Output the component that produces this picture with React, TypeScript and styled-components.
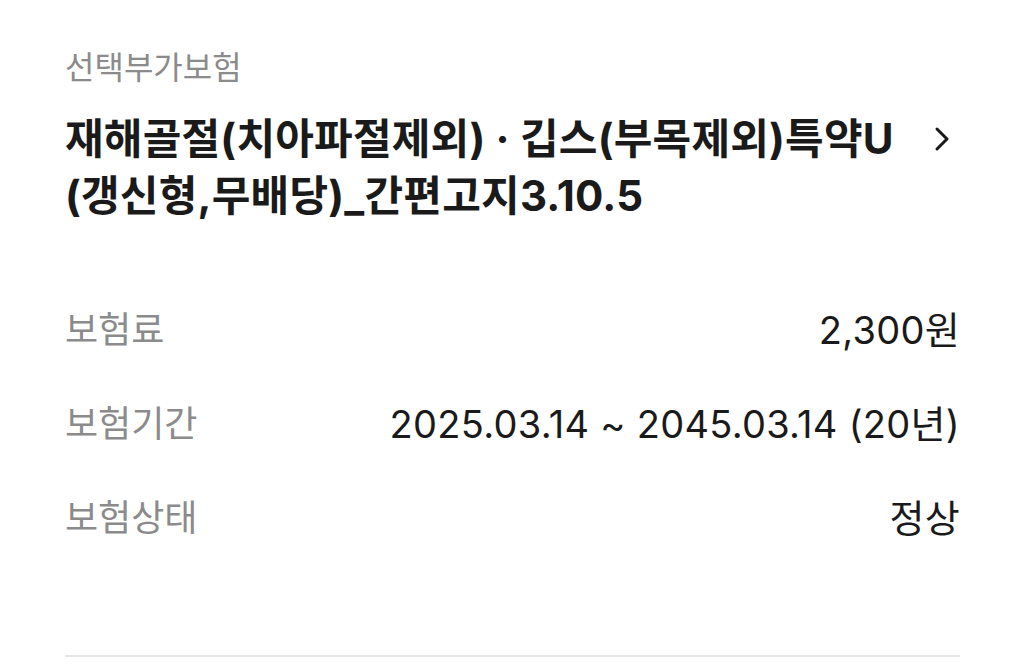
import { FC } from 'react'
import styled, { createGlobalStyle } from 'styled-components'

const GlobalStyle = createGlobalStyle`
    html, body {
        margin: 0;
        padding: 0;
        background: #ffffff;
    }
    body {
        font-family: "Noto Sans CJK KR", "Noto Sans", sans-serif;
        -webkit-font-smoothing: antialiased;
    }
`;

const Wrapper = styled.section`
    display: flex;
    flex-direction: column;
    width: 1025px;
    height: 665px;
    box-sizing: border-box;
    padding: 40px 65px 0;
    overflow: hidden;
`;

const Category = styled.p`
    margin: 0;
    font-size: 32px;
    line-height: 50px;
    color: #8b8b8b;
`;

const TitleRow = styled.div`
    display: flex;
    align-items: flex-start;
    justify-content: space-between;
    margin-top: 20px;
    cursor: pointer;
`;

const Title = styled.h2`
    margin: 0;
    flex-grow: 1;
    font-family: "Inter", "Noto Sans CJK KR", sans-serif;
    font-size: 42px;
    line-height: 57px;
    font-weight: 700;
    letter-spacing: 0.2px;
    color: #1a1a1a;
`;

const Chevron = styled.span`
    display: flex;
    align-items: center;
    justify-content: center;
    flex-shrink: 0;
    width: 40px;
    height: 57px;
    margin-right: -2px;
    color: #1a1a1a;
`;

const InfoList = styled.dl`
    display: flex;
    flex-direction: column;
    gap: 46px;
    margin: 79px 0 0;
`;

const InfoRow = styled.div`
    display: flex;
    justify-content: space-between;
    align-items: center;
    height: 48px;
`;

const Label = styled.dt`
    font-size: 36px;
    color: #8b8b8b;
`;

const Value = styled.dd`
    margin: 0;
    font-family: "Inter", "Noto Sans CJK KR", sans-serif;
    font-size: 38px;
    letter-spacing: 0.3px;
    color: #1a1a1a;
`;

const Divider = styled.hr`
    margin: auto 0 8px;
    border: 0;
    height: 2px;
    background-color: #e6e6e6;
`;

const rows = [
    { label: '보험료', value: '2,300원' },
    { label: '보험기간', value: '2025.03.14 ~ 2045.03.14 (20년)' },
    { label: '보험상태', value: '정상' },
];

const App: FC = () => {
    return (
        <>
            <GlobalStyle />
            <Wrapper>
                <Category>선택부가보험</Category>
                <TitleRow>
                    <Title>
                        재해골절(치아파절제외) · 깁스(부목제외)특약U
                        <br />
                        (갱신형,무배당)_간편고지3.10.5
                    </Title>
                    <Chevron>
                        <svg width="16" height="26" viewBox="0 0 16 26" fill="none">
                            <path d="M3 3 L13 13 L3 23" stroke="currentColor" strokeWidth="3" strokeLinecap="round" strokeLinejoin="round" />
                        </svg>
                    </Chevron>
                </TitleRow>
                <InfoList>
                    {rows.map((row) => (
                        <InfoRow key={row.label}>
                            <Label>{row.label}</Label>
                            <Value>{row.value}</Value>
                        </InfoRow>
                    ))}
                </InfoList>
                <Divider />
            </Wrapper>
        </>
    );
}

export default App;
